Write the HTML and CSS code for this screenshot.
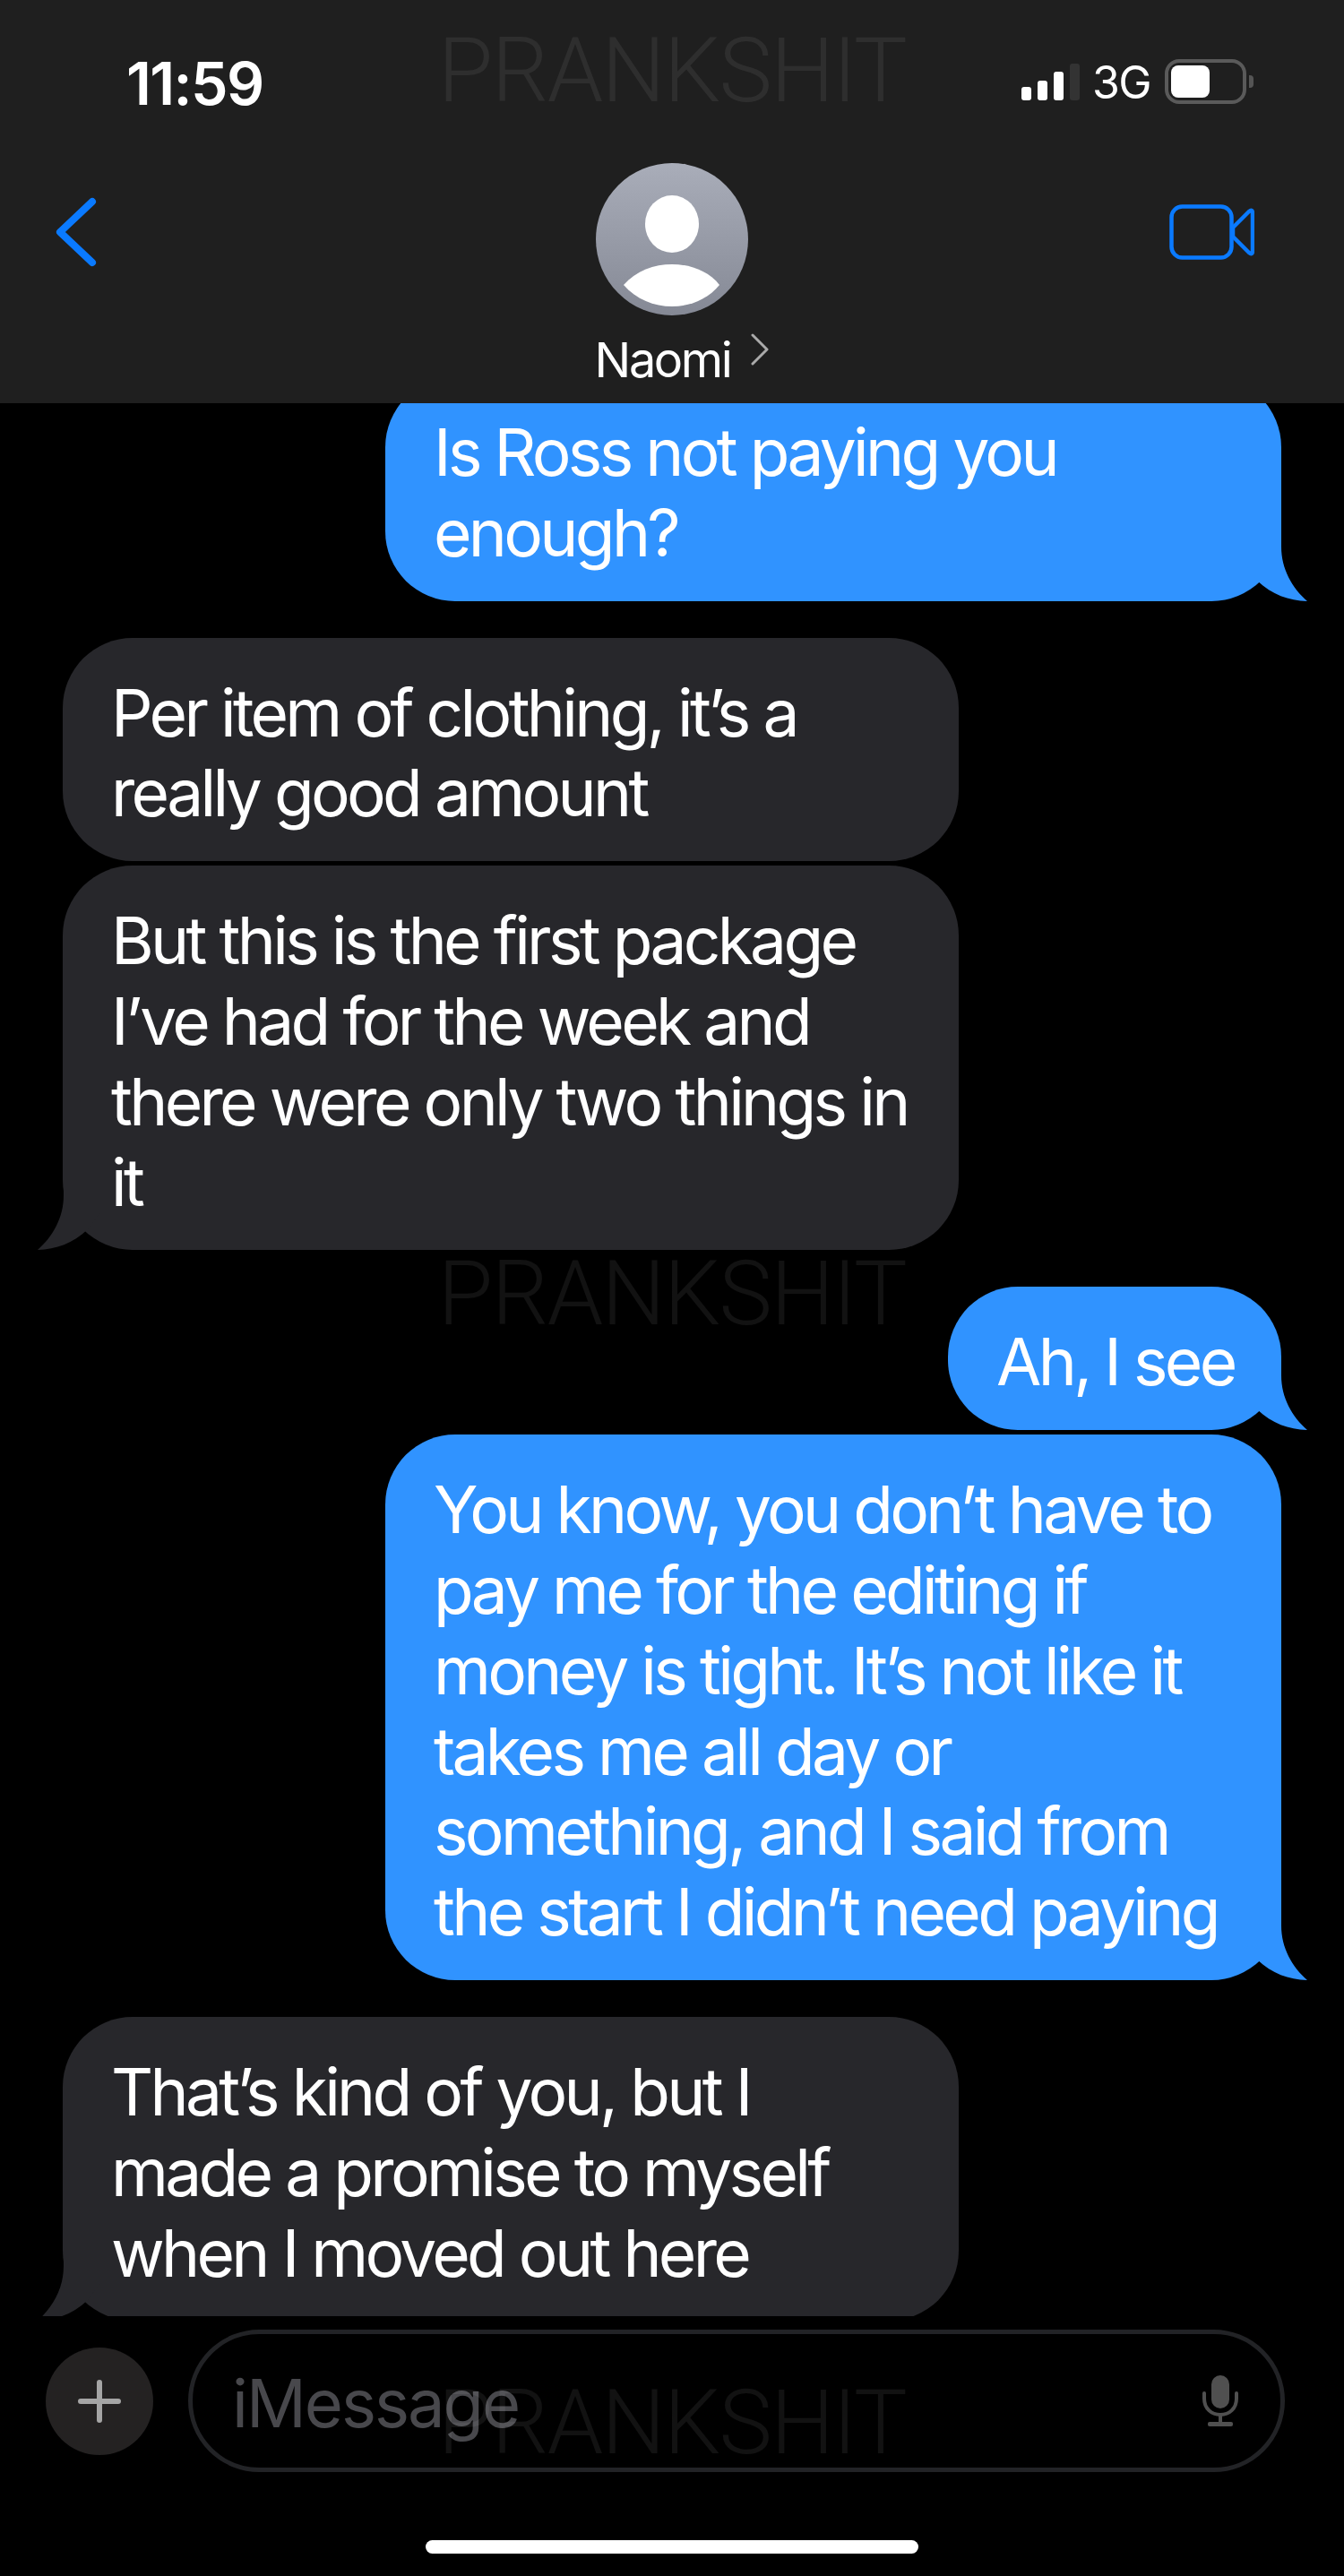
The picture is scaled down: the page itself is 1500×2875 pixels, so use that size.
FILE: index.html
```html
<!DOCTYPE html>
<html lang="en">
<head>
  <meta charset="UTF-8">
  <title>Naomi</title>
  <link rel="stylesheet" href="styles.css">
</head>
<body>
  <div class="screen">

    <div class="top">
      <div class="status">
        <div class="time">11:59</div>
        <div class="signal">
          <span class="bar bar1"></span>
          <span class="bar bar2"></span>
          <span class="bar bar3"></span>
          <span class="bar bar4"></span>
        </div>
        <div class="network">3G</div>
        <div class="battery"><span class="battery-fill"></span></div>
        <span class="battery-cap"></span>
      </div>

      <div class="nav">
        <svg class="back" width="46" height="78" viewBox="0 0 46 78">
          <path d="M41 5 L5 39 L41 73" fill="none" stroke="#0a7aff" stroke-width="8" stroke-linecap="round" stroke-linejoin="round"/>
        </svg>
        <div class="contact">
          <svg width="170" height="170" viewBox="0 0 170 170">
            <defs>
              <linearGradient id="avatarGrad" x1="0" y1="0" x2="0" y2="1">
                <stop offset="0" stop-color="#a9adb9"/>
                <stop offset="1" stop-color="#858995"/>
              </linearGradient>
            </defs>
            <circle cx="85" cy="85" r="85" fill="url(#avatarGrad)"/>
            <ellipse cx="85" cy="68" rx="30" ry="32" fill="#fff"/>
            <path d="M31 136 C45 120 65 113 85 113 C105 113 125 120 138 136 C125 152 105 160 85 160 C65 160 45 152 31 136Z" fill="#fff"/>
          </svg>
          <div class="name-row">
            <span class="name">Naomi</span>
            <svg width="20" height="36" viewBox="0 0 20 36">
              <path d="M2 2 L18 18 L2 34" fill="none" stroke="#aaa" stroke-width="3" stroke-linecap="round" stroke-linejoin="round"/>
            </svg>
          </div>
        </div>
        <svg class="video" width="95" height="62" viewBox="0 0 95 62">
          <rect x="2.5" y="2.5" width="67" height="57" rx="12" fill="none" stroke="#0a7aff" stroke-width="4.5"/>
          <path d="M71 26 L89 8 Q93 5 93 10 V52 Q93 57 89 54 L71 36 Z" fill="none" stroke="#0a7aff" stroke-width="4.5" stroke-linejoin="round"/>
        </svg>
      </div>
    </div>

    <div class="messages">
      <div class="bubble sent first">
        Is Ross not paying you<br>enough?
        <svg class="tail" width="70" height="81" viewBox="0 0 70 81"><path d="M40 20 C40 45 52 66 69 81 C48 80 30 74 13 58 L0 40 L0 0 L40 0 Z"/></svg>
      </div>

      <div class="bubble received">
        Per item of clothing, it’s a<br>really good amount
      </div>
      <div class="bubble received grouped">
        But this is the first package<br>I’ve had for the week and<br>there were only two things in<br>it
        <svg class="tail" width="70" height="81" viewBox="0 0 70 81"><path d="M40 20 C40 45 52 66 69 81 C48 80 30 74 13 58 L0 40 L0 0 L40 0 Z"/></svg>
      </div>

      <div class="bubble sent short">
        Ah, I see
        <svg class="tail" width="70" height="81" viewBox="0 0 70 81"><path d="M40 20 C40 45 52 66 69 81 C48 80 30 74 13 58 L0 40 L0 0 L40 0 Z"/></svg>
      </div>
      <div class="bubble sent grouped">
        You know, you don’t have to<br>pay me for the editing if<br>money is tight. It’s not like it<br>takes me all day or<br>something, and I said from<br>the start I didn’t need paying
        <svg class="tail" width="70" height="81" viewBox="0 0 70 81"><path d="M40 20 C40 45 52 66 69 81 C48 80 30 74 13 58 L0 40 L0 0 L40 0 Z"/></svg>
      </div>

      <div class="bubble received">
        That’s kind of you, but I<br>made a promise to myself<br>when I moved out here
        <svg class="tail" width="70" height="81" viewBox="0 0 70 81"><path d="M40 20 C40 45 52 66 69 81 C48 80 30 74 13 58 L0 40 L0 0 L40 0 Z"/></svg>
      </div>
    </div>

    <div class="composer">
      <div class="plus">
        <svg width="48" height="48" viewBox="0 0 48 48">
          <path d="M24 3 V45 M3 24 H45" stroke="#a5a5a5" stroke-width="6" stroke-linecap="round"/>
        </svg>
      </div>
      <div class="field">
        <span class="placeholder">iMessage</span>
        <svg width="40" height="58" viewBox="0 0 40 58">
          <rect x="10" y="0" width="20" height="37" rx="10" fill="#505050"/>
          <path d="M2 20 V26 C2 37 10 44 20 44 C30 44 38 37 38 26 V20" fill="none" stroke="#505050" stroke-width="4" stroke-linecap="round"/>
          <path d="M20 44 V54" stroke="#505050" stroke-width="4"/>
          <rect x="6" y="52" width="28" height="5" rx="2" fill="#505050"/>
        </svg>
      </div>
    </div>

    <div class="home-bar"></div>

    <div class="watermark wm-top">PRANKSHIT</div>
    <div class="watermark wm-middle">PRANKSHIT</div>
    <div class="watermark wm-bottom">PRANKSHIT</div>
  </div>
</body>
</html>
```

FILE: styles.css
```css
body {
  margin: 0;
  background-color: #000;
  font-family: Inter, "Liberation Sans", sans-serif;
  color: #fff;
}

.screen {
  position: relative;
  width: 1500px;
  height: 2875px;
  overflow: hidden;
  background-color: #000;
}

/* header */
.top {
  height: 450px;
  box-sizing: border-box;
  background-color: #1f1f1f;
}

.status {
  display: flex;
  align-items: center;
  height: 182px;
  padding-left: 141px;
}

.time {
  width: 999px;
  font-size: 66px;
  font-weight: 600;
  letter-spacing: -1.6px;
  margin-top: 4px;
}

.signal {
  display: flex;
  align-items: flex-end;
  gap: 7px;
  height: 41px;
  margin-top: 0;
}

.bar {
  width: 11px;
  background-color: #fff;
  border-radius: 3px;
}

.bar1 { height: 15px; }
.bar2 { height: 22px; }
.bar3 { height: 32px; }
.bar4 { height: 41px; background-color: #333; }

.network {
  margin-left: 14px;
  width: 81px;
  font-size: 50px;
  letter-spacing: -1.6px;
  margin-top: 2px;
}

.battery {
  box-sizing: border-box;
  width: 91px;
  height: 50px;
  padding: 3px;
  border: 4px solid #5a5a5a;
  border-radius: 16px;
}

.battery-fill {
  display: block;
  width: 43px;
  height: 36px;
  background-color: #fff;
  border-radius: 8px;
}

.battery-cap {
  width: 5px;
  height: 14px;
  margin-left: 3px;
  background-color: #555;
  border-radius: 0 4px 4px 0;
}

.nav {
  display: grid;
  grid-template-columns: 1fr auto 1fr;
  padding: 0 100px;
}

.back {
  margin: 38px 0 0 -38px;
}

.contact {
  display: flex;
  flex-direction: column;
  align-items: center;
}

.name-row {
  display: flex;
  align-items: flex-start;
  gap: 23px;
  margin-top: 20px;
  margin-left: 22px;
}

.name {
  font-size: 54px;
  line-height: 60px;
  letter-spacing: -2.4px;
}

.video {
  justify-self: end;
  margin-top: 46px;
}

/* conversation */
.messages {
  display: flex;
  flex-direction: column;
  height: 2135px;
  box-sizing: border-box;
  padding: 0 70px;
  overflow: hidden;
}

.bubble {
  position: relative;
  flex-shrink: 0;
  box-sizing: border-box;
  width: 1000px;
  margin-top: 41px;
  padding: 39px 56px 31px 54px;
  border-radius: 78px;
  font-size: 73px;
  line-height: 89.8px;
  letter-spacing: -3.7px;
  white-space: nowrap;
}

.sent {
  align-self: flex-end;
  background-color: #3093ff;
}

.received {
  align-self: flex-start;
  background-color: #27272b;
}

.first {
  margin-top: -29px;
}

.grouped {
  margin-top: 5px;
}

.short {
  width: 372px;
}

.tail {
  position: absolute;
  bottom: 0;
}

.sent .tail {
  right: -30px;
  fill: #3093ff;
}

.received .tail {
  left: -29px;
  fill: #27272b;
  transform: scaleX(-1);
}

/* input row */
.composer {
  display: flex;
  align-items: center;
  gap: 39px;
  padding: 15px 0 0 51px;
}

.plus {
  display: flex;
  align-items: center;
  justify-content: center;
  width: 120px;
  height: 120px;
  border-radius: 50%;
  background-color: #242222;
}

.field {
  display: flex;
  align-items: center;
  justify-content: space-between;
  box-sizing: border-box;
  width: 1224px;
  height: 159px;
  padding: 0 47px 0 44px;
  border: 5px solid #222326;
  border-radius: 80px;
}

.placeholder {
  margin-top: 5px;
  font-size: 74px;
  letter-spacing: -2px;
  color: #48484c;
}

.home-bar {
  width: 550px;
  height: 15px;
  margin: 76px auto 0;
  background-color: #fff;
  border-radius: 8px;
}

/* overlay text */
.watermark {
  position: absolute;
  left: 0;
  width: 1500px;
  text-align: center;
  font-family: Roboto, "Liberation Sans", sans-serif;
  font-size: 100px;
  font-weight: 300;
  line-height: 100px;
  letter-spacing: -1.6px;
  color: rgba(255, 255, 255, 0.07);
  pointer-events: none;
}

.wm-top { top: 29px; }
.wm-middle { top: 1394px; }
.wm-bottom { top: 2654px; }
```
